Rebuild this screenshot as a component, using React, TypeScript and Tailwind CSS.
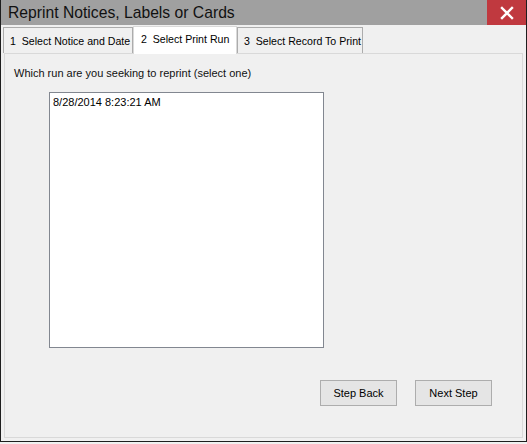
import React from "react";

const tabs = [
  { label: "1  Select Notice and Date", w: "w-[130px]", active: false },
  { label: "2  Select Print Run", w: "w-[104px]", active: true },
  { label: "3  Select Record To Print", w: "w-[126px]", active: false },
];

export default function App() {
  return (
    <div className="w-[527px] h-[444px] bg-[#f0f0f0] font-['Liberation_Sans',Arial,sans-serif] text-black">
      <div className="h-[442px] border-x border-b border-[#1e1e1e] flex flex-col">
        {/* title bar */}
        <div className="h-[25px] bg-[#a0a0a0] flex items-center justify-between shrink-0">
          <div className="pl-[7px] text-[15.7px] leading-none text-[#111]">
            Reprint Notices, Labels or Cards
          </div>
          <div className="w-[39px] h-[25px] bg-[#c0393f] flex items-center justify-center">
            <svg width="14" height="14" viewBox="0 0 14 14">
              <path d="M2 2 L12 12 M12 2 L2 12" stroke="#fff" strokeWidth="2.4" strokeLinecap="square" />
            </svg>
          </div>
        </div>

        {/* tabs */}
        <div className="flex items-end pl-[2px] h-[28px] shrink-0">
          {tabs.map((t) =>
            t.active ? (
              <div
                key={t.label}
                className={`${t.w} shrink-0 h-[28px] bg-white border-x border-t border-[#d9d9d9] text-[10.6px] flex items-center pl-[7px] pb-[2px] relative z-10 -mb-px whitespace-pre overflow-hidden`}
              >
                {t.label}
              </div>
            ) : (
              <div
                key={t.label}
                className={`${t.w} shrink-0 h-[26px] bg-[#f0f0f0] border border-[#acacac] border-b-0 text-[10.6px] flex items-center pl-[6px] pt-[2px] whitespace-pre overflow-hidden`}
              >
                {t.label}
              </div>
            )
          )}
        </div>

        {/* tab page */}
        <div className="mx-[3px] h-[385px] border border-[#d9d9d9] bg-[#f0f0f0] flex flex-col">
          <div className="pl-[9px] pt-[12px] text-[11px] leading-[14px] text-[#111]">
            Which run are you seeking to reprint (select one)
          </div>
          <div className="ml-[44px] mt-[12px] w-[275px] h-[256px] bg-white border border-[#828790] text-[11px] leading-[14px] pl-[3px] pt-[2px]">
            8/28/2014 8:23:21 AM
          </div>
          <div className="flex gap-[18px] ml-[315px] mt-[32px]">
            <button className="w-[77px] h-[26px] bg-[#e5e5e5] border border-[#adadad] text-[11px]">
              Step Back
            </button>
            <button className="w-[77px] h-[26px] bg-[#e5e5e5] border border-[#adadad] text-[11px]">
              Next Step
            </button>
          </div>
        </div>
      </div>
    </div>
  );
}
